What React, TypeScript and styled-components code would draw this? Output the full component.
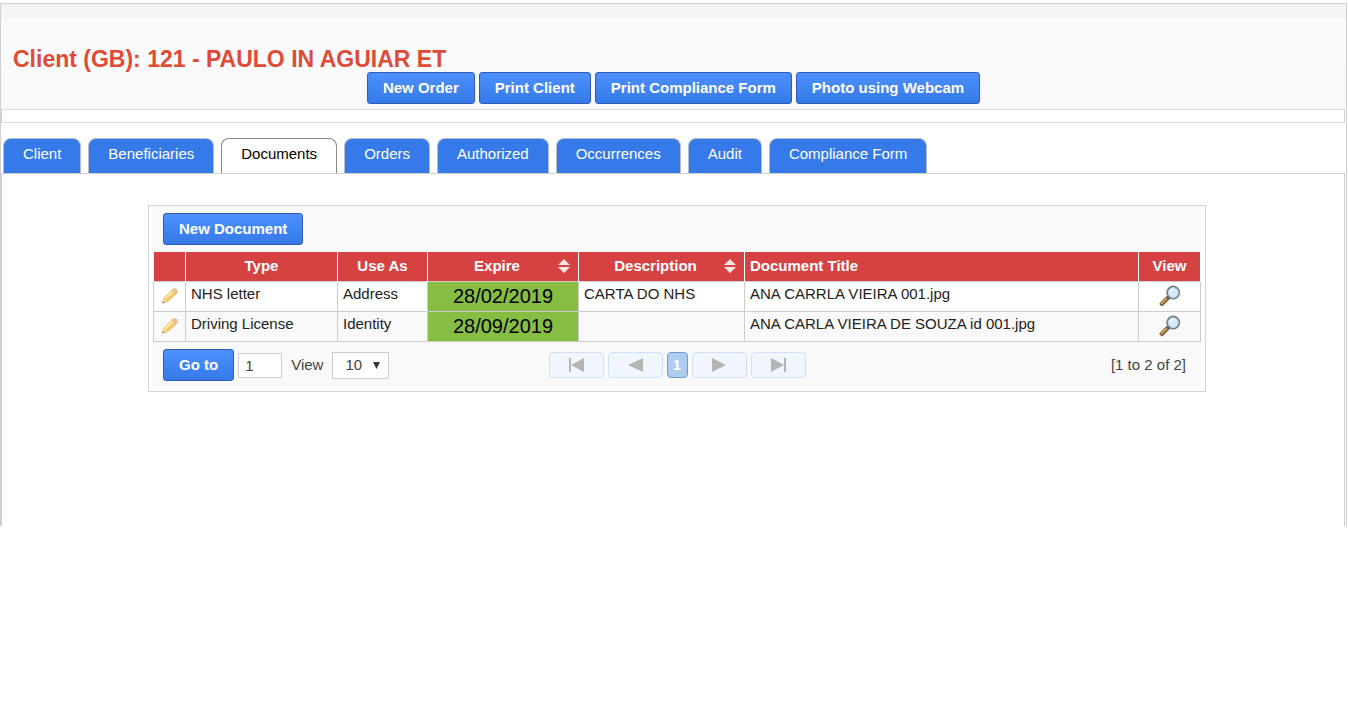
import React from "react";
import styled, { createGlobalStyle, css } from "styled-components";

const GlobalStyle = createGlobalStyle`
  *, *::before, *::after { box-sizing: border-box; }
  body {
    margin: 0;
    background: #fff;
    color: #222;
    font-family: "Liberation Sans", Arial, sans-serif;
    font-size: 15px;
    line-height: 16px;
  }
  button, input, select { font: inherit; }
`;

const Frame = styled.main`
  margin: 3px 1px 0 0;
  border: 1px solid #d0d0d0;
  border-bottom: 0;
  background: #fff;
`;

const Header = styled.header`
  padding: 43px 12px 5px;
  background: linear-gradient(#f4f4f4 0 14px, #f9fafc 14px 61px, #f9f9f9 61px);
`;

const Title = styled.h1`
  margin: 0;
  color: #df4b37;
  font-size: 23px;
  line-height: 25px;
  font-weight: 700;
`;

const Actions = styled.div`
  display: flex;
  justify-content: center;
  gap: 4px;
`;

const Button = styled.button`
  height: 32px;
  padding: 0 15px;
  border: 1px solid #2f5bb7;
  border-radius: 3px;
  background: linear-gradient(#4d90fe, #357ae8);
  color: #fff;
  font-weight: 700;
  white-space: nowrap;
  cursor: pointer;
`;

const MessageBar = styled.div`
  height: 14px;
  margin-right: 1px;
  border: 1px solid #dcdcdc;
  border-left-color: #d0d0d0;
  border-right-color: #d0d0d0;
`;

const Tabs = styled.nav`
  display: flex;
  gap: 7px;
  padding: 15px 2px 0;
`;

const Tab = styled.a<{ $active?: boolean }>`
  height: 35px;
  padding: 7px 19px 0;
  border: 1px solid #b4bccb;
  border-bottom: 0;
  border-radius: 8px 8px 0 0;
  background: #357ae8;
  color: #fff;
  text-decoration: none;
  white-space: nowrap;
  ${(p) =>
    p.$active &&
    css`
      border-color: #888;
      background: #fff;
      color: #000;
    `}
`;

const TabPanel = styled.section`
  min-height: 353px;
  margin-right: 1px;
  padding: 31px 138px 0 146px;
  border: 1px solid #d0d0d0;
  border-bottom: 0;
`;

const Grid = styled.div`
  padding: 0 4px 4px;
  border: 1px solid #d4d4d4;
`;

const Toolbar = styled.div`
  height: 46px;
  padding: 7px 10px;
  background: #f9f9f9;
`;

const Table = styled.table`
  width: 100%;
  table-layout: fixed;
  border-collapse: collapse;
`;

const Column = styled.col<{ $width?: number }>`
  width: ${(p) => (p.$width ? `${p.$width}px` : "auto")};
`;

const HeadCell = styled.th<{ $left?: boolean }>`
  height: 29px;
  padding: 0 5px;
  border: 1px solid #fff;
  border-width: 0 1px;
  background: #d64242;
  color: #fff;
  text-align: ${(p) => (p.$left ? "left" : "center")};
`;

const Sortable = styled.div`
  display: flex;
  align-items: center;
  justify-content: space-between;
  padding: 0 3px;

  span { flex: 1; }
`;

const Row = styled.tr`
  background: #fff;
  &:nth-child(even) { background: #f9f9f9; }
`;

const Cell = styled.td<{ $icon?: boolean }>`
  height: 30px;
  padding: ${(p) => (p.$icon ? "0" : "4px 5px 9px")};
  border: 1px solid #ccc;
  text-align: ${(p) => (p.$icon ? "center" : "left")};
  vertical-align: ${(p) => (p.$icon ? "middle" : "top")};
  white-space: nowrap;
`;

const DateCell = styled(Cell)`
  padding: 0;
  background: #87bd43;
  color: #000;
  font-size: 20px;
  line-height: 28px;
  text-align: center;
`;

const IconButton = styled.button`
  display: block;
  margin: 0 auto;
  padding: 0;
  border: 0;
  background: none;
  cursor: pointer;
  svg { display: block; }
`;

const Footer = styled.div`
  display: grid;
  grid-template-columns: 1fr auto 1fr;
  align-items: center;
  height: 45px;
  padding: 2px 10px 0;
  background: #f9f9f9;
  color: #444;
`;

const FooterLeft = styled.div`
  display: flex;
  align-items: center;
  gap: 4px;
`;

const PageInput = styled.input`
  width: 44px;
  height: 25px;
  padding: 0 6px;
  border: 1px solid #ccc;
  background: #fff;
  color: #444;
`;

const ViewLabel = styled.label`
  display: flex;
  align-items: center;
  gap: 9px;
  margin-left: 5px;
`;

const SelectBox = styled.span`
  display: grid;
  align-items: center;

  select, svg { grid-area: 1 / 1; }
  svg {
    justify-self: end;
    margin-right: 9px;
    pointer-events: none;
  }
`;

const Select = styled.select`
  appearance: none;
  width: 57px;
  height: 27px;
  padding: 0 12px;
  border: 1px solid #ccc;
  border-radius: 0;
  background: #fff;
  color: #444;
`;

const Pager = styled.div`
  display: flex;
  align-items: center;
  gap: 4px;
`;

const PagerButton = styled.button<{ $current?: boolean }>`
  display: flex;
  align-items: center;
  justify-content: center;
  width: ${(p) => (p.$current ? "21px" : "55px")};
  height: 26px;
  padding: 0;
  border: 1px solid ${(p) => (p.$current ? "#6f9bd1" : "#cfe0fb")};
  border-radius: 4px;
  background: ${(p) => (p.$current ? "#aecbf0" : "#f1f6fe")};
  color: #fff;
  font-weight: 700;
`;

const Count = styled.span`
  justify-self: end;
  margin-right: 5px;
`;

const SortIcon = () => (
  <svg width="12" height="14" viewBox="0 0 12 14" fill="#f8e4e0" aria-hidden="true">
    <path d="M6 0 L12 6 H0Z M0 8 H12 L6 14Z" />
  </svg>
);

const PencilIcon = () => (
  <svg width="18" height="18" viewBox="0 0 18 18" aria-hidden="true">
    <path d="M1.5 16 L2.6 11.4 L11.6 2.4 Q13.6 .8 15.6 2.6 Q17.2 4.4 15.6 6.4 L6.4 14.8Z" fill="#f5c860" stroke="#e0ae62" strokeWidth=".8" />
    <path d="M3.8 12 L12.4 3.6" stroke="#fde9a4" strokeWidth="2.2" />
    <path d="M11.8 2.5 Q13.6 .8 15.6 2.6 Q17.2 4.4 15.6 6.3 L14.8 7 L11 3.3Z" fill="#f2bd8c" />
    <path d="M10.8 3.6 L14.4 7.2" stroke="#dccda6" strokeWidth="1" />
    <path d="M1.5 16 L2.6 11.6 L4.4 13.2 L6.2 14.8Z" fill="#f3dcb4" />
    <path d="M1.3 16.3 L1.9 14.2 L3.5 15.7Z" fill="#8a7863" />
  </svg>
);

const MagnifierIcon = () => (
  <svg width="22" height="22" viewBox="0 0 22 22" aria-hidden="true">
    <path d="M2.8 18.8 L8.6 13.2" stroke="#82603a" strokeWidth="4.4" strokeLinecap="round" />
    <path d="M2.6 18.2 L8 13" stroke="#c99c5e" strokeWidth="2.2" strokeLinecap="round" />
    <path d="M8.2 13.6 L10.4 11.4" stroke="#5f5a55" strokeWidth="3" />
    <circle cx="14.2" cy="7.6" r="6.1" fill="#d4ebfd" stroke="#71808d" strokeWidth="1.8" />
    <circle cx="14.2" cy="7.6" r="4.9" fill="none" stroke="#c3ced8" strokeWidth="1" />
    <path d="M10.8 7.4 Q11.4 4.6 14.6 4.2" fill="none" stroke="#f4fbff" strokeWidth="1.4" />
  </svg>
);

const arrowShapes = {
  first: "M1 1H3V15H1Z M16 1V15L3 8Z",
  previous: "M16 1V15L1 8Z",
  next: "M1 1V15L15 8Z",
  last: "M1 1V15L14 8Z M14 1H16V15H14Z",
};

const ArrowIcon = ({ kind }: { kind: keyof typeof arrowShapes }) => (
  <svg width="17" height="16" viewBox="0 0 17 16" fill="#b5b5b5" aria-hidden="true">
    <path d={arrowShapes[kind]} />
  </svg>
);

const actions = ["New Order", "Print Client", "Print Compliance Form", "Photo using Webcam"];
const tabs = ["Client", "Beneficiaries", "Documents", "Orders", "Authorized", "Occurrences", "Audit", "Compliance Form"];
const documents = [
  { type: "NHS letter", use: "Address", expire: "28/02/2019", description: "CARTA DO NHS", title: "ANA CARRLA VIEIRA 001.jpg" },
  { type: "Driving License", use: "Identity", expire: "28/09/2019", description: "", title: "ANA CARLA VIEIRA DE SOUZA id 001.jpg" },
];

export default function App() {
  return (
    <>
      <GlobalStyle />
      <Frame>
        <Header>
          <Title>Client (GB): 121 - PAULO IN AGUIAR ET</Title>
          <Actions>
            {actions.map((label) => (
              <Button key={label} type="button">{label}</Button>
            ))}
          </Actions>
        </Header>
        <MessageBar />
        <Tabs>
          {tabs.map((label) => (
            <Tab key={label} href="#" $active={label === "Documents"}>{label}</Tab>
          ))}
        </Tabs>
        <TabPanel>
          <Grid>
            <Toolbar>
              <Button type="button">New Document</Button>
            </Toolbar>
            <Table>
              <colgroup>
                <Column $width={32} />
                <Column $width={152} />
                <Column $width={90} />
                <Column $width={151} />
                <Column $width={166} />
                <Column />
                <Column $width={62} />
              </colgroup>
              <thead>
                <tr>
                  <HeadCell aria-label="Edit" />
                  <HeadCell>Type</HeadCell>
                  <HeadCell>Use As</HeadCell>
                  <HeadCell><Sortable><span>Expire</span><SortIcon /></Sortable></HeadCell>
                  <HeadCell><Sortable><span>Description</span><SortIcon /></Sortable></HeadCell>
                  <HeadCell $left>Document Title</HeadCell>
                  <HeadCell>View</HeadCell>
                </tr>
              </thead>
              <tbody>
                {documents.map((doc) => (
                  <Row key={doc.title}>
                    <Cell $icon><IconButton type="button" aria-label="Edit document"><PencilIcon /></IconButton></Cell>
                    <Cell>{doc.type}</Cell>
                    <Cell>{doc.use}</Cell>
                    <DateCell>{doc.expire}</DateCell>
                    <Cell>{doc.description}</Cell>
                    <Cell>{doc.title}</Cell>
                    <Cell $icon><IconButton type="button" aria-label="View document"><MagnifierIcon /></IconButton></Cell>
                  </Row>
                ))}
              </tbody>
            </Table>
            <Footer>
              <FooterLeft>
                <Button type="button">Go to</Button>
                <PageInput aria-label="Page number" defaultValue="1" />
                <ViewLabel>
                  View
                  <SelectBox>
                    <Select defaultValue="10">
                      <option>10</option>
                      <option>20</option>
                      <option>50</option>
                    </Select>
                    <svg width="7" height="7" viewBox="0 0 7 7" fill="#333" aria-hidden="true"><path d="M0 0H7L3.5 7Z" /></svg>
                  </SelectBox>
                </ViewLabel>
              </FooterLeft>
              <Pager>
                <PagerButton type="button" aria-label="First page"><ArrowIcon kind="first" /></PagerButton>
                <PagerButton type="button" aria-label="Previous page"><ArrowIcon kind="previous" /></PagerButton>
                <PagerButton type="button" $current>1</PagerButton>
                <PagerButton type="button" aria-label="Next page"><ArrowIcon kind="next" /></PagerButton>
                <PagerButton type="button" aria-label="Last page"><ArrowIcon kind="last" /></PagerButton>
              </Pager>
              <Count>[1 to 2 of 2]</Count>
            </Footer>
          </Grid>
        </TabPanel>
      </Frame>
    </>
  );
}
